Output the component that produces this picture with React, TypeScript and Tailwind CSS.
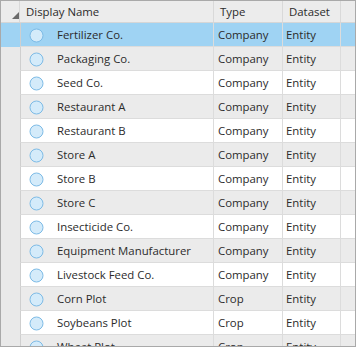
const rows = [
  { name: "Fertilizer Co.", type: "Company", dataset: "Entity" },
  { name: "Packaging Co.", type: "Company", dataset: "Entity" },
  { name: "Seed Co.", type: "Company", dataset: "Entity" },
  { name: "Restaurant A", type: "Company", dataset: "Entity" },
  { name: "Restaurant B", type: "Company", dataset: "Entity" },
  { name: "Store A", type: "Company", dataset: "Entity" },
  { name: "Store B", type: "Company", dataset: "Entity" },
  { name: "Store C", type: "Company", dataset: "Entity" },
  { name: "Insecticide Co.", type: "Company", dataset: "Entity" },
  { name: "Equipment Manufacturer", type: "Company", dataset: "Entity" },
  { name: "Livestock Feed Co.", type: "Company", dataset: "Entity" },
  { name: "Corn Plot", type: "Crop", dataset: "Entity" },
  { name: "Soybeans Plot", type: "Crop", dataset: "Entity" },
  { name: "Wheat Plot", type: "Crop", dataset: "Entity" },
];

const cols = "grid grid-cols-[19px_194px_69px_58px_1fr]";

export default function App() {
  return (
    <div
      className="w-[356px] h-[347px] overflow-hidden border border-[#a9a9a9] bg-[#e9e9e9] text-[11.4px] text-[#2b2b2b]"
      style={{ fontFamily: '"Open Sans", "Noto Sans", sans-serif' }}
    >
      <div className={`${cols} h-[22px] bg-[#ececec] border-b border-[#d6d6d6]`}>
        <div className="flex items-end justify-end pb-[3px] border-r border-[#d9d9d9]">
          <svg width="7" height="7" viewBox="0 0 7 7">
            <polygon points="7,0 7,7 0,7" fill="#6b6b6b" />
          </svg>
        </div>
        <div className="flex items-center pl-[6px] pt-[1px] border-r border-[#d9d9d9]">Display Name</div>
        <div className="flex items-center pl-[6px] pt-[1px] border-r border-[#d9d9d9]">Type</div>
        <div className="flex items-center pl-[6px] pt-[1px] border-r border-[#d9d9d9]">Dataset</div>
        <div />
      </div>
      {rows.map((r, i) => {
        const selected = i === 0;
        const bg = selected ? "bg-[#9fd3f3]" : i % 2 === 1 ? "bg-[#ebebeb]" : "bg-white";
        return (
          <div key={r.name} className={`${cols} h-[24px]`}>
            <div className={selected ? "bg-[#9fd3f3]" : "bg-[#e9e9e9]"} />
            <div className={`${bg} flex items-center pt-[1px] border-b border-r border-[#dcdcdc] border-l border-l-[#cfcfcf]`}>
              <svg width="15" height="15" viewBox="0 0 15 15" className="ml-[8px]">
                <circle cx="7.5" cy="7.5" r="6.5" fill="#d4ebfa" stroke="#7dbbe6" strokeWidth="1" />
              </svg>
              <span className="ml-[13px]">{r.name}</span>
            </div>
            <div className={`${bg} flex items-center pl-[4px] pt-[1px] border-b border-r border-[#dcdcdc]`}>{r.type}</div>
            <div className={`${bg} flex items-center pl-[3px] pt-[1px] border-b border-r border-[#dcdcdc]`}>{r.dataset}</div>
            <div className={`${bg} border-b border-[#dcdcdc]`} />
          </div>
        );
      })}
    </div>
  );
}
